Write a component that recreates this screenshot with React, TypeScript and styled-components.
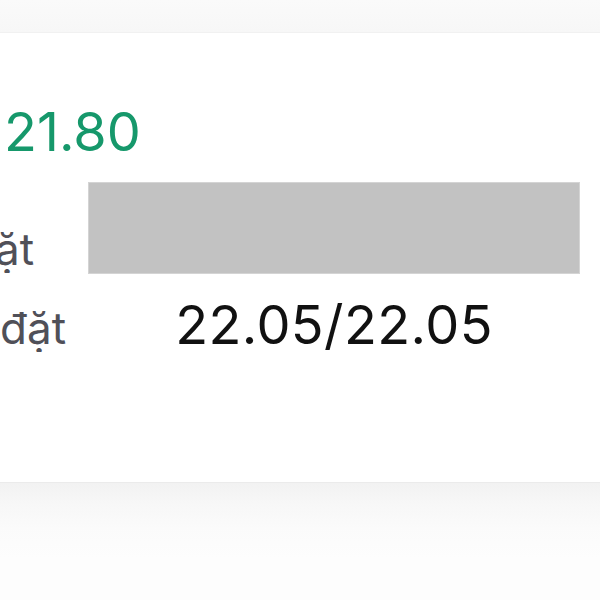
import React from 'react';
import styled, { createGlobalStyle } from 'styled-components';

const GlobalStyle = createGlobalStyle`
	html, body {
		margin: 0;
		padding: 0;
		background: #fdfdfd;
		overflow: hidden;
	}
	body {
		font-family: Inter, "Liberation Sans", "Noto Sans", sans-serif;
	}
`;

const Screen = styled.div`
	width: 600px;
	height: 600px;
	display: flex;
	flex-direction: column;
	overflow: hidden;
	background: #fdfdfd;
`;

const TopBand = styled.div`
	height: 32px;
	background: linear-gradient(#fafafa, #f7f7f7);
	border-bottom: 1px solid #f1f1f1;
	flex-shrink: 0;
`;

const Card = styled.div`
	height: 449px;
	background: #ffffff;
	padding-top: 67px;
	box-sizing: border-box;
	flex-shrink: 0;
`;

const Price = styled.div`
	font-size: 54px;
	line-height: 64px;
	color: #16986b;
	margin-left: 4px;
`;

const Row = styled.div<{ $align: string; $gap: number }>`
	display: grid;
	grid-template-columns: 89px 490px;
	align-items: ${({ $align }) => $align};
	margin-top: ${({ $gap }) => $gap}px;
`;

const LabelCell = styled.div`
	overflow: hidden;
	white-space: nowrap;
	text-align: left;
`;

const Label = styled.span<{ $shift: number }>`
	display: inline-block;
	margin-left: ${({ $shift }) => $shift}px;
	font-size: 44px;
	line-height: 48px;
	color: #505058;
`;

const Redacted = styled.div`
	height: 90px;
	background: #c2c2c2;
	box-shadow: 0 0 0 1px #d4d4d4;
`;

const Value = styled.div`
	font-size: 54px;
	line-height: 64px;
	color: #111111;
	text-align: center;
	letter-spacing: 0.4px;
`;

const BottomBand = styled.div`
	flex: 1;
	border-top: 1px solid #ebebeb;
	background: linear-gradient(#f2f2f2 0px, #f7f7f7 20px, #fbfbfb 45px, #fdfdfd 75px);
`;

export default function App(): JSX.Element {
	return (
		<Screen>
			<GlobalStyle />
			<TopBand />
			<Card>
				<Price>21.80</Price>
				<Row $align="end" $gap={19}>
					<LabelCell>
						<Label $shift={-5}>ặt</Label>
					</LabelCell>
					<Redacted />
				</Row>
				<Row $align="baseline" $gap={20}>
					<LabelCell>
						<Label $shift={0}>đặt</Label>
					</LabelCell>
					<Value>22.05/22.05</Value>
				</Row>
			</Card>
			<BottomBand />
		</Screen>
	);
}
